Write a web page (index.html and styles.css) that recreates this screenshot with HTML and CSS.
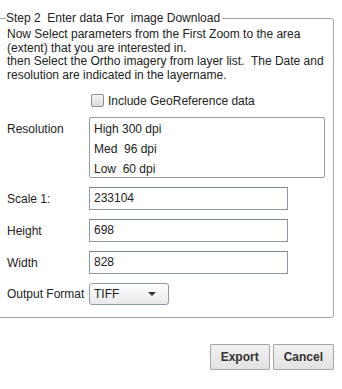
FILE: index.html
```html
<!DOCTYPE html>
<html>
<head>
<meta charset="utf-8">
<link rel="stylesheet" href="styles.css">
</head>
<body>
<fieldset class="panel">
  <legend class="panel-title">Step 2&nbsp; Enter data For&nbsp; image Download</legend>
  <p class="intro">Now Select parameters from the First Zoom to the area (extent) that you are interested in.<br>then Select the Ortho imagery from layer list.&nbsp; The Date and resolution are indicated in the layername.</p>
  <label class="check-row"><span class="checkbox"></span>Include GeoReference data</label>
  <div class="form">
    <div class="label label-top">Resolution</div>
    <div class="listbox">
      <div class="item">High 300 dpi</div>
      <div class="item">Med&nbsp; 96 dpi</div>
      <div class="item">Low&nbsp; 60 dpi</div>
    </div>
    <div class="label">Scale 1:</div>
    <div class="input">233104</div>
    <div class="label">Height</div>
    <div class="input">698</div>
    <div class="label">Width</div>
    <div class="input">828</div>
    <div class="label">Output Format</div>
    <div class="select"><span>TIFF</span><span class="arrow"></span></div>
  </div>
</fieldset>
<div class="actions">
  <button class="btn">Export</button>
  <button class="btn">Cancel</button>
</div>
</body>
</html>
```

FILE: styles.css
```css
html, body {
  margin: 0;
  padding: 0;
  background: #fff;
}
body {
  font-family: "Liberation Sans", Arial, sans-serif;
  font-size: 12px;
  color: #222;
  width: 342px;
  overflow: hidden;
}
.panel {
  margin: 11px 0 0 -4px;
  width: 338px;
  box-sizing: border-box;
  border: 1px solid #a3a3a3;
  border-radius: 3px;
  padding: 2px 6px 12px 10px;
  min-width: 0;
}
.panel-title {
  padding: 0 2px 0 0;
  margin-left: -1px;
  line-height: 15px;
}
.intro {
  margin: 0;
  line-height: 13.6px;
}
.check-row {
  display: flex;
  align-items: center;
  margin: 10px 0 0 84px;
  height: 17px;
}
.checkbox {
  width: 11px;
  height: 11px;
  border: 1px solid #8e8f8f;
  border-radius: 2px;
  background: linear-gradient(#f4f4f4, #dcdcdc);
  margin-right: 4px;
}
.form {
  display: grid;
  grid-template-columns: 82px auto;
  row-gap: 9px;
  margin-top: 8px;
  align-items: center;
}
.label {
  white-space: nowrap;
}
.label-top {
  align-self: start;
  padding-top: 5px;
}
.listbox {
  width: 236px;
  height: 61px;
  box-sizing: border-box;
  border: 1px solid #9a9a9a;
  border-radius: 2px;
  padding: 1px 4px;
}
.item {
  height: 20px;
  line-height: 20px;
}
.input {
  width: 199px;
  height: 23px;
  box-sizing: border-box;
  border: 1px solid #8d99a6;
  border-top-color: #7d8794;
  padding: 0 4px;
  line-height: 21px;
}
.select {
  width: 80px;
  height: 22px;
  box-sizing: border-box;
  border: 1px solid #8d99a6;
  border-radius: 3px;
  background: linear-gradient(#fdfdfd, #e7e9ec);
  display: flex;
  align-items: center;
  justify-content: space-between;
  padding: 0 12px 0 4px;
}
.arrow {
  width: 0;
  height: 0;
  border-left: 4px solid transparent;
  border-right: 4px solid transparent;
  border-top: 4px solid #333;
}
.actions {
  display: flex;
  justify-content: flex-end;
  gap: 3px;
  padding: 26px 8px 0 0;
}
.btn {
  font-family: "Liberation Sans", Arial, sans-serif;
  font-size: 12px;
  font-weight: bold;
  color: #333;
  height: 26px;
  padding: 0 10px;
  border: 1px solid #a6a6a6;
  border-radius: 1px;
  background: linear-gradient(#f2f2f2, #e2e2e2);
}
```
